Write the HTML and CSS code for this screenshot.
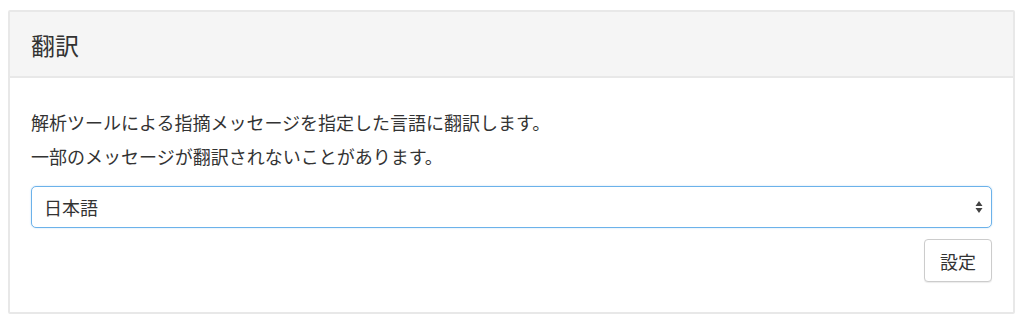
FILE: index.html
```
<!DOCTYPE html>
<html lang="ja">

<head>
    <meta charset="UTF-8">
    <meta name="viewport" content="width=device-width, initial-scale=1.0">
    <title>翻訳</title>
    <link rel="stylesheet" href="styles.css">
</head>

<body>
    <div class="panel">
        <div class="panel-heading">
            <h3 class="panel-title">翻訳</h3>
        </div>
        <div class="panel-body">
            <p>解析ツールによる指摘メッセージを指定した言語に翻訳します。</p>
            <p>一部のメッセージが翻訳されないことがあります。</p>
            <form class="lang-form">
                <select class="lang-select">
                    <option>日本語</option>
                    <option>English</option>
                </select>
                <div class="actions">
                    <button type="button" class="btn">設定</button>
                </div>
            </form>
        </div>
    </div>
</body>
</html>
```

FILE: styles.css
```
body {
    margin: 10px 9px 0 8px;
    font-family: "Noto Sans CJK JP", "Noto Sans", sans-serif;
    font-size: 18px;
    color: #333;
    background-color: #fff;
}

.panel {
    border: 2px solid #e8e8e8;
    border-radius: 2px;
    background-color: #fff;
}

.panel-heading {
    background-color: #f5f5f5;
    border-bottom: 2px solid #e8e8e8;
    padding: 0 21px;
    height: 64px;
    display: flex;
    align-items: center;
}

.panel-title {
    margin: 0;
    font-size: 24px;
    font-weight: normal;
    line-height: 1;
    padding-top: 2px;
}

.panel-body {
    padding: 32px 21px 30px;
}

.panel-body p {
    margin: 0 0 10px;
    line-height: 24px;
}

.lang-form {
    margin-top: 18px;
}

.lang-select {
    display: block;
    width: 100%;
    height: 42px;
    padding: 0 30px 0 12px;
    font-family: inherit;
    font-size: 18px;
    color: #333;
    background-color: #fff;
    background-image: url("data:image/svg+xml;utf8,<svg xmlns='http://www.w3.org/2000/svg' width='8' height='14' viewBox='0 0 8 14'><path d='M4 1 L7.5 6 L0.5 6 Z M4 13 L7.5 8 L0.5 8 Z' fill='%23444'/></svg>");
    background-repeat: no-repeat;
    background-position: right 8px center;
    border: 1px solid #6cb2ea;
    border-radius: 5px;
    box-shadow: 0 0 2px rgba(102, 175, 233, 0.4);
    appearance: none;
    -webkit-appearance: none;
    outline: none;
}

.actions {
    display: flex;
    justify-content: flex-end;
    margin-top: 11px;
}

.btn {
    width: 68px;
    height: 43px;
    font-family: inherit;
    font-size: 18px;
    color: #333;
    background-color: #fff;
    border: 1px solid #ccc;
    border-radius: 4px;
    box-shadow: 0 1px 1px rgba(0, 0, 0, 0.08);
    cursor: pointer;
}

.btn:hover {
    background-color: #e6e6e6;
}
```
